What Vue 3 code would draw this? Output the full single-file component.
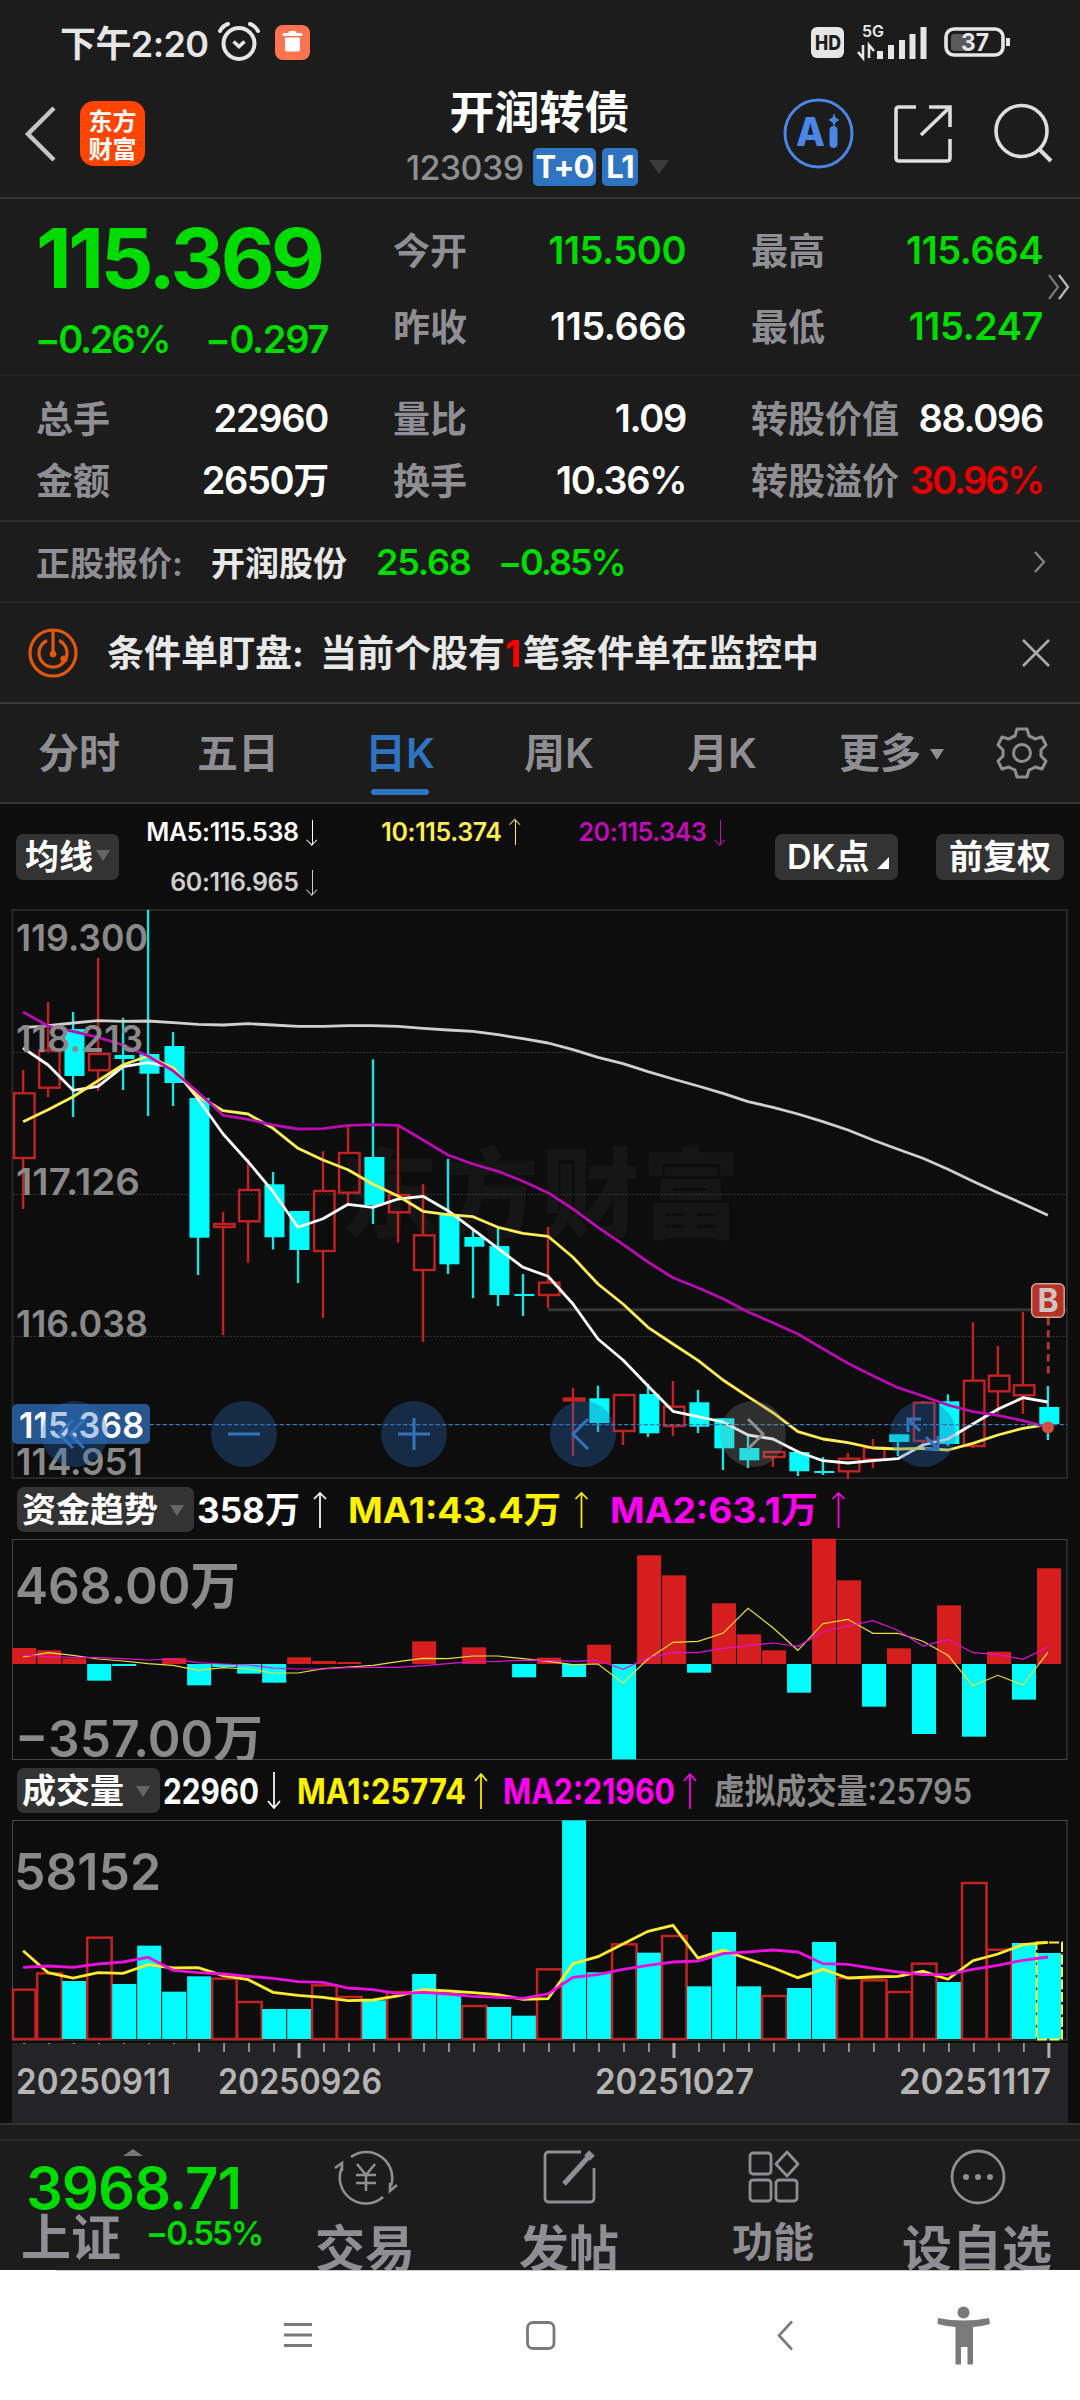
<script setup>
const STEP = 24.995;
const cx = (i) => 23.1 + STEP * i;

// kind, high, body top, body bottom, low
const candles = [
  ["r", 1070, 1093.3, 1158, 1209],
  ["r", 1002, 1050.5, 1087.7, 1097],
  ["c", 1012, 1029, 1076, 1117],
  ["r", 958, 1054, 1070.3, 1091],
  ["c", 1018, 1055, 1059, 1090],
  ["c", 910, 1054, 1073.7, 1116],
  ["c", 1032, 1046, 1083, 1106],
  ["c", 1098, 1098, 1237.7, 1275],
  ["r", 1212, 1224, 1227, 1335],
  ["r", 1159, 1190, 1221.3, 1263],
  ["c", 1172, 1184.3, 1237.3, 1249.5],
  ["c", 1211, 1211, 1250, 1283],
  ["r", 1151.3, 1191, 1251, 1318],
  ["r", 1125.7, 1153, 1192.7, 1203],
  ["c", 1059.3, 1157, 1205, 1224],
  ["r", 1126.7, 1195, 1212.3, 1242.5],
  ["r", 1184, 1235.3, 1270, 1342],
  ["c", 1159, 1215, 1264.3, 1274],
  ["c", 1230, 1237, 1246.7, 1298],
  ["c", 1227, 1246, 1295, 1306],
  ["c", 1274, 1294, 1296, 1316],
  ["r", 1227, 1282.7, 1295, 1308],
  ["r", 1387.7, 1398.5, 1400.5, 1456],
  ["c", 1385.7, 1398.3, 1423, 1432],
  ["r", 1395, 1395, 1431, 1445],
  ["c", 1383.7, 1394, 1433.3, 1437],
  ["r", 1381, 1406.7, 1426, 1436],
  ["c", 1390, 1402.3, 1426.7, 1433],
  ["c", 1418, 1418.3, 1448.3, 1470],
  ["c", 1436, 1448, 1460.3, 1468],
  ["r", 1452, 1452, 1457, 1467],
  ["c", 1450, 1452, 1471.3, 1476],
  ["c", 1457, 1471, 1473, 1475],
  ["r", 1453, 1458.7, 1471.3, 1479],
  ["r", 1439, 1447.7, 1459.3, 1468],
  ["c", 1434, 1434.3, 1442, 1456],
  ["r", 1401, 1402.7, 1441, 1447],
  ["c", 1394.3, 1401.3, 1444, 1446],
  ["r", 1322.3, 1380.7, 1446, 1448],
  ["r", 1346, 1375.7, 1391.3, 1413],
  ["r", 1311.7, 1385.3, 1395.3, 1414],
  ["c", 1386, 1407, 1424, 1440],
];

const ma5 = [1048, 1065, 1090.3, 1086.3, 1066.7, 1062.7, 1067.5, 1099, 1134, 1161.7, 1191.7, 1227.3, 1218.7, 1204.3, 1207.3, 1199, 1196.3, 1210.7, 1229.3, 1248.3, 1267.3, 1276.3, 1304, 1339, 1360, 1386, 1411.3, 1416.7, 1422, 1435, 1439, 1451.7, 1460.7, 1463, 1460.7, 1458.7, 1445, 1439, 1424, 1409.3, 1397.7, 1402];
const ma10 = [1121.7, 1109.7, 1096.7, 1080.7, 1064.7, 1056, 1068.3, 1096, 1110.7, 1114, 1128.3, 1148.3, 1160, 1169.7, 1184.3, 1196, 1211.3, 1214.7, 1216.7, 1227.3, 1233.3, 1236.3, 1257.3, 1284, 1304, 1327.3, 1344, 1360.3, 1380, 1396.7, 1412.7, 1431.7, 1439, 1442.7, 1448, 1449, 1448.3, 1450, 1443.3, 1435, 1428.3, 1424.3];
const ma20 = [1012, 1026, 1031.3, 1037.3, 1045, 1056, 1070.7, 1092.3, 1115.3, 1119.3, 1125, 1129, 1128.7, 1125.3, 1124.7, 1125.3, 1140, 1155, 1164, 1171.3, 1181.3, 1192.7, 1209, 1227.3, 1244.3, 1262, 1277.7, 1287.7, 1298.7, 1312, 1322.7, 1334, 1348.7, 1363.3, 1375.7, 1387.7, 1396, 1405, 1411.7, 1415.3, 1420.7, 1427.3];
const ma60 = [1027.7, 1025.7, 1023, 1020.7, 1021.3, 1021, 1022.7, 1024.3, 1025, 1023.7, 1025, 1026.3, 1026.3, 1025.7, 1025.7, 1026.3, 1028.3, 1030, 1031.3, 1034.7, 1038.7, 1043, 1049.7, 1057.3, 1063.7, 1071.7, 1079, 1086, 1093.3, 1101.7, 1107.3, 1114, 1121.7, 1130, 1140, 1149.3, 1158.3, 1169.3, 1181.3, 1192.7, 1203.7, 1215.3];

// fund flow, positive = inflow
const flow = [48, 41, 17, -50, -6, 0, 18, -64, -9, -29, -56, 20, 9, 6, 0, 0, 68, 0, 50, 0, -40, 19, -39, 58, -286, 326, 266, -26, 182, 89, 41, -86, 376, 251, -128, 47, -210, 176, -218, 37, -107, 287];
const flowMa1 = [381, 368, 376, 387, 393, 401, 406, 421, 413, 417, 429, 429, 416, 411, 406, 395, 385, 386, 378, 378, 386, 394, 404, 402, 459, 387, 337, 334, 310, 235, 293, 361, 281, 268, 310, 310, 334, 376, 467, 436, 465, 367];
const flowMa2 = [375, 380, 382, 383, 386, 390, 387, 398, 402, 405, 414, 417, 417, 413, 412, 412, 407, 401, 395, 394, 391, 391, 394, 391, 418, 383, 367, 368, 355, 347, 339, 349, 306, 288, 272, 301, 348, 328, 368, 373, 388, 351];

const volume = [148, 197, 174, 304, 165, 280, 142, 188, 181, 111, 90, 90, 161, 126, 116, 141, 195, 136, 99, 96, 70, 209, 656, 200, 284, 259, 309, 158, 321, 158, 129, 153, 291, 183, 176, 141, 226, 171, 468, 268, 288, 258];
const volKind = "rrcrccccrrccrrcrccrccrccrcrcccrccrrrrcrrcc";
const volMa1 = [422, 488, 504, 488, 490, 464, 474, 473, 497, 509, 547, 556, 562, 572, 570, 558, 539, 543, 548, 554, 568, 566, 461, 440, 402, 364, 346, 444, 421, 447, 473, 503, 478, 504, 501, 499, 484, 508, 452, 432, 404, 397];
const volMa2 = [472, 468, 472, 462, 456, 442, 481, 488, 492, 499, 505, 515, 517, 534, 539, 551, 547, 552, 559, 562, 565, 552, 502, 494, 478, 466, 456, 453, 431, 426, 420, 426, 461, 463, 475, 486, 494, 493, 478, 466, 451, 441];

const line = (arr, base = 0, k = 1) =>
  arr.map((v, i) => `${cx(i).toFixed(1)},${(base + v / k).toFixed(1)}`).join(" ");

const priceLabels = [
  { t: "119.300", y: 951, w: 132 },
  { t: "118.213", y: 1052, w: 127 },
  { t: "117.126", y: 1195, w: 124 },
  { t: "116.038", y: 1337, w: 132 },
  { t: "114.951", y: 1475, w: 127 },
];

const dates = [
  { t: "20250911", x: 16, w: 155 },
  { t: "20250926", x: 218, w: 164 },
  { t: "20251027", x: 595, w: 159 },
  { t: "20251117", x: 899, w: 152 },
];

const tabs = ["分时", "五日", "日K", "周K", "月K"];
</script>

<template>
  <div class="app">
    <div class="status">
      <span class="time">下午2:20</span>
      <svg class="alarm" width="42" height="40" viewBox="0 0 42 40" fill="none" stroke="#e6e6e6">
        <circle cx="21" cy="21.500" r="15.500" stroke-width="4" />
        <path d="M2 9 Q5 3.500 10 2M40 9 Q37 3.500 32 2" stroke-width="4" stroke-linecap="round" />
        <path d="M15.500 19.500l5.500 5 5.500-5" stroke-width="3.600" />
      </svg>
      <svg class="trash" width="35" height="35" viewBox="0 0 35 35">
        <rect width="35" height="35" rx="8" fill="#ff7350" />
        <path d="M9 9.500h17M15 7.500h5" stroke="#fff" stroke-width="3" stroke-linecap="round" />
        <path d="M10 12.500h15v12q0 2-2 2h-11q-2 0-2-2z" fill="#fff" />
      </svg>
      <svg class="signals" width="204" height="40" viewBox="808 22 204 40">
        <rect x="811" y="27" width="33" height="31" rx="6" fill="#e6e6e6" />
        <text x="815" y="50" font-size="20" font-weight="800" fill="#1c1c1c" textLength="26" lengthAdjust="spacingAndGlyphs">HD</text>
        <text x="862" y="37" font-size="16" font-weight="600" fill="#e6e6e6" textLength="22" lengthAdjust="spacingAndGlyphs">5G</text>
        <path d="M863 45v13l-5-6M869 58V45l5 6" fill="none" stroke="#e6e6e6" stroke-width="2.600" />
        <path d="M880 59v-8M891 59V45M902 59V40M912.500 59V34M923.500 59V27" stroke="#e6e6e6" stroke-width="6" />
        <rect x="946" y="29" width="57" height="26" rx="8" fill="none" stroke="#e6e6e6" stroke-width="3.600" />
        <rect x="951" y="34" width="19" height="17" rx="3" fill="#5a5a5a" />
        <path d="M1008 38v8" stroke="#e6e6e6" stroke-width="4" />
        <text x="961" y="51" font-size="24" font-weight="700" fill="#e6e6e6" textLength="28" lengthAdjust="spacingAndGlyphs">37</text>
      </svg>
    </div>

    <header class="header">
      <svg class="back" width="34" height="58" viewBox="0 0 34 58" fill="none" stroke="#c4c4c4" stroke-width="4.500">
        <path d="M30 3L4 29l26 26" />
      </svg>
      <div class="logo"><span>东方</span><span>财富</span></div>
      <div class="title">
        <div class="name">开润转债</div>
        <div class="code">
          <span class="num">123039</span><b class="t0">T+0</b><b class="l1">L1</b><i class="tri"></i>
        </div>
      </div>
      <svg class="tools" width="280" height="72" viewBox="780 97 280 72" fill="none">
        <circle cx="818.500" cy="133.500" r="33.500" stroke="#4a86e8" stroke-width="3" />
        <text x="796" y="146" font-size="40" font-weight="800" fill="#4a86e8" textLength="29" lengthAdjust="spacingAndGlyphs">A</text>
        <path d="M833.500 130v14" stroke="#4a86e8" stroke-width="8" stroke-linecap="round" />
        <path d="M834 113l1.500 4.500 4 2.500-4 2.500-1.500 4.500-1.500-4.500-4-2.500 4-2.500z" fill="#4a86e8" />
        <path d="M916 107h-17q-3 0-3 3v48q0 3 3 3h48q3 0 3-3v-19M929 107h21v20M949 108l-28 27" stroke="#ddd" stroke-width="3.600" />
        <circle cx="1021.500" cy="131" r="25.500" stroke="#ddd" stroke-width="3.600" />
        <path d="M1039 149l12 12" stroke="#ddd" stroke-width="4" />
      </svg>
    </header>

    <section class="quote">
      <div class="last">
        <div class="price num">115.369</div>
        <div class="chg num"><span class="pct">−0.26%</span><span>−0.297</span></div>
      </div>
      <div class="pair"><label>今开</label><span class="num wide up">115.500</span></div>
      <div class="pair"><label>最高</label><span class="num wide up">115.664</span></div>
      <div class="pair"><label>昨收</label><span class="num wide">115.666</span></div>
      <div class="pair"><label>最低</label><span class="num wide up">115.247</span></div>
      <svg class="more" width="24" height="28" viewBox="0 0 24 28" fill="none" stroke-width="2.200">
        <path d="M2 2l9 12-9 12" stroke="#777" /><path d="M12 2l9 12-9 12" stroke="#bbb" />
      </svg>
    </section>

    <section class="stats">
      <div class="pair"><label>总手</label><span class="num">22960</span></div>
      <div class="pair"><label>量比</label><span class="num">1.09</span></div>
      <div class="pair"><label>转股价值</label><span class="num">88.096</span></div>
      <div class="pair"><label>金额</label><span class="num">2650<small>万</small></span></div>
      <div class="pair"><label>换手</label><span class="num">10.36%</span></div>
      <div class="pair"><label>转股溢价</label><span class="num pct hot">30.96%</span></div>
    </section>

    <section class="stock">
      <span class="lab">正股报价:</span>
      <span class="sname">开润股份</span>
      <span class="num up p">25.68</span>
      <span class="num pct up">−0.85%</span>
      <svg width="14" height="24" viewBox="0 0 14 24" fill="none" stroke="#888" stroke-width="2.200"><path d="M2 2l9 10-9 10" /></svg>
    </section>

    <section class="alert">
      <svg width="50" height="50" viewBox="0 0 50 50" fill="none" stroke="#e2560f" stroke-width="3.200">
        <circle cx="25" cy="25" r="23" />
        <path d="M19 12.500A14 14 0 1 0 31 12.500" />
        <path d="M25 2v22" />
        <circle cx="25" cy="26" r="3" fill="#e2560f" stroke-width="1" />
        <circle cx="36" cy="31" r="2" fill="#e2560f" />
      </svg>
      <p><span class="lead">条件单盯盘:</span>当前个股有<em>1</em>笔条件单在监控中</p>
      <svg class="x" width="28" height="28" viewBox="0 0 28 28" stroke="#aaa" stroke-width="2.600"><path d="M1 1l26 26M27 1L1 27" /></svg>
    </section>

    <nav class="tabs">
      <span v-for="t in tabs" :key="t" :class="{ on: t === '日K' }">{{ t }}</span>
      <span class="moretab">更多<i class="tri"></i></span>
      <svg width="52" height="52" viewBox="-26 -26 52 52" fill="none" stroke="#8e8e93" stroke-width="3" stroke-linejoin="round">
        <path d="M-5-24H5L7-17Q10-16 13-14L20-16 24-8 19-3V3L24 8 20 16 13 14Q10 16 7 17L5 24H-5L-7 17Q-10 16-13 14L-20 16-24 8-19 3V-3L-24-8-20-16-13-14Q-10-16-7-17Z" />
        <circle r="8.500" />
      </svg>
    </nav>

    <div class="legend">
      <button class="chip">均线<i class="tri"></i></button>
      <div class="mas num">
        <span>MA5:115.538<i class="dn"></i></span>
        <span class="y">10:115.374<i class="upa"></i></span>
        <span class="m">20:115.343<i class="dn"></i></span>
        <span class="g">60:116.965<i class="dn"></i></span>
      </div>
      <button class="chip dk">DK点<i class="corner"></i></button>
      <button class="chip fq">前复权</button>
    </div>

    <svg class="chart" width="1080" height="572" viewBox="0 908 1080 572">
      <text class="mark" x="340" y="1230" textLength="400">东方财富</text>
      <rect x="12.500" y="910" width="1054.500" height="568" fill="none" stroke="#262626" stroke-width="2" />
      <path d="M13 1052.500H1067M13 1194.500H1067M13 1336.500H1067" stroke="#333" stroke-dasharray="2 1.500" />
      <path d="M548 1309.700H1067" stroke="#363636" stroke-width="3" />

      <g v-for="(c, i) in candles" :key="i">
        <template v-if="c[0] === 'r'">
          <path :d="`M${cx(i)} ${c[1]}V${c[2]}M${cx(i)} ${c[3]}V${c[4]}`" stroke="#c32222" stroke-width="2.400" />
          <rect :x="cx(i) - 9" :y="c[2]" width="20.500" :height="c[3] - c[2]" fill="none" stroke="#c32222" stroke-width="2.400" />
        </template>
        <template v-else>
          <path :d="`M${cx(i)} ${c[1]}V${c[4]}`" stroke="#22e0e0" stroke-width="2.400" />
          <rect :x="cx(i) - 8.600" :y="c[2]" width="20" :height="c[3] - c[2]" fill="#00fcfc" />
        </template>
      </g>

      <g fill="none" stroke-width="2.800" stroke-linejoin="round">
        <polyline :points="line(ma60)" stroke="#cfcfcf" />
        <polyline :points="line(ma5)" stroke="#fff" />
        <polyline :points="line(ma10)" stroke="#ffee55" />
        <polyline :points="line(ma20)" stroke="#b80cb0" />
      </g>

      <text v-for="p in priceLabels" :key="p.t" x="16" :y="p.y" :textLength="p.w" lengthAdjust="spacingAndGlyphs" class="axis">{{ p.t }}</text>
      <path d="M13 1424.600H1067" stroke="#3a76b8" stroke-width="1.300" stroke-dasharray="4.500 2" />
      <rect x="12" y="1404" width="138" height="40" rx="5" fill="#25568f" />
      <text x="19" y="1438" textLength="125" lengthAdjust="spacingAndGlyphs" class="cur">115.368</text>

      <path d="M1048.200 1318v56" stroke="#a83a2c" stroke-width="3" stroke-dasharray="7.500 4.500" />
      <rect x="1031.700" y="1283.700" width="32.500" height="33.500" rx="5" fill="#b83224" stroke="#c9a39c" stroke-width="1.500" />
      <text x="1048" y="1312" text-anchor="middle" font-size="32" font-weight="700" fill="#cfc4c2">B</text>
      <circle cx="1048" cy="1427.500" r="6" fill="#d05040" />

      <g fill="#2a6ab5" fill-opacity=".34">
        <circle cx="74.500" cy="1434" r="33" />
        <circle cx="244" cy="1434" r="33" />
        <circle cx="414" cy="1434" r="33" />
        <circle cx="583" cy="1434" r="33" />
        <circle cx="923" cy="1434" r="33" />
      </g>
      <circle cx="753" cy="1434" r="33" fill="#8a8a8a" fill-opacity=".28" />
      <g fill="none" stroke="#3273bd" stroke-width="3">
        <path d="M73 1420l-14 14 14 14M84 1420l-14 14 14 14" />
        <path d="M228 1434h32M398 1434h32M414 1418v32" />
        <path d="M588 1419l-15 15 15 15" />
        <path d="M920 1431l-12-12M908 1432v-13h13M926 1437l12 12M938 1436v13h-13" />
      </g>
      <path d="M748 1419l15 15-15 15" fill="none" stroke="#8e8e93" stroke-width="3" />
    </svg>

    <div class="ind">
      <button class="chip">资金趋势<i class="tri"></i></button>
      <svg width="860" height="58" viewBox="196 1480 860 58" class="vals">
        <text x="197" y="1523" textLength="103" lengthAdjust="spacingAndGlyphs" fill="#fff">358万</text>
        <text x="348" y="1523" textLength="213" lengthAdjust="spacingAndGlyphs" fill="#fff200">MA1:43.4万</text>
        <text x="610" y="1523" textLength="208" lengthAdjust="spacingAndGlyphs" fill="#ff00f0">MA2:63.1万</text>
        <g fill="none" stroke-width="1.700">
          <path d="M320 1528v-35M314 1499l6-6 6 6" stroke="#fff" />
          <path d="M581.500 1528v-35M575.500 1499l6-6 6 6" stroke="#fff200" />
          <path d="M838.500 1528v-35M832.500 1499l6-6 6 6" stroke="#ff00f0" />
        </g>
      </svg>
    </div>

    <svg class="chart" width="1080" height="223" viewBox="0 1538 1080 223">
      <rect x="12.500" y="1539.500" width="1054.500" height="220" fill="none" stroke="#444" />
      <rect
        v-for="(v, i) in flow" :key="i" :x="cx(i) - 10.900" width="24"
        :y="v > 0 ? 1664 - v / 3 : 1664" :height="Math.abs(v) / 3" :fill="v > 0 ? '#d61e1e' : '#00fcfc'"
      />
      <polyline :points="line(flowMa1, 1530, 3)" fill="none" stroke="#e8e040" stroke-width="1.200" />
      <polyline :points="line(flowMa2, 1530, 3)" fill="none" stroke="#e010d8" stroke-width="1.200" />
      <text x="15" y="1604" textLength="225" lengthAdjust="spacingAndGlyphs" class="axis big">468.00万</text>
      <text x="15" y="1757" textLength="248" lengthAdjust="spacingAndGlyphs" class="axis big">−357.00万</text>
      <rect x="0" y="1760" width="1080" height="2" fill="#0d0d0d" />
    </svg>

    <div class="ind vol">
      <button class="chip">成交量<i class="tri"></i></button>
      <svg width="900" height="58" viewBox="162 1761 900 58" class="vals">
        <text x="163" y="1804" textLength="96" lengthAdjust="spacingAndGlyphs" fill="#fff">22960</text>
        <text x="297" y="1804" textLength="169" lengthAdjust="spacingAndGlyphs" fill="#fff200">MA1:25774</text>
        <text x="503" y="1804" textLength="172" lengthAdjust="spacingAndGlyphs" fill="#ff00f0">MA2:21960</text>
        <text x="714" y="1804" textLength="258" lengthAdjust="spacingAndGlyphs" fill="#888" class="virt">虚拟成交量:25795</text>
        <g fill="none" stroke-width="1.700">
          <path d="M274 1772v36M268 1801l6 7 6-7" stroke="#fff" />
          <path d="M481 1809v-35M475 1781l6-7 6 7" stroke="#fff200" />
          <path d="M690 1809v-35M684 1781l6-7 6 7" stroke="#ff00f0" />
        </g>
      </svg>
    </div>

    <svg class="chart" width="1080" height="304" viewBox="0 1819 1080 304">
      <rect x="12.500" y="1820.500" width="1054.500" height="219.500" fill="none" stroke="#4a4a4a" />
      <template v-for="(v, i) in volume" :key="i">
        <rect v-if="volKind[i] === 'c'" :x="cx(i) - 10.900" :y="2039 - v / 3" width="24" :height="v / 3" fill="#00fcfc" />
        <rect v-else :x="Math.max(13, cx(i) - 10.900)" :y="2039 - v / 3" :width="i ? 24.500 : 22.500" :height="v / 3" fill="none" stroke="#c32222" stroke-width="2.500" />
      </template>
      <rect x="1036.500" y="1942.500" width="25.500" height="97" fill="none" stroke="#fff23a" stroke-width="2" stroke-dasharray="10 2.500" />
      <polyline :points="line(volMa1, 1810, 3)" fill="none" stroke="#ffec2e" stroke-width="2.800" />
      <polyline :points="line(volMa2, 1810, 3)" fill="none" stroke="#e812dc" stroke-width="2.800" />
      <text x="14" y="1890" textLength="147" lengthAdjust="spacingAndGlyphs" class="axis big">58152</text>

      <rect x="12" y="2043" width="1056" height="80" fill="#242426" />
      <path
        v-for="(v, i) in volume" :key="'t' + i" :d="`M${cx(i) + 1} 2043v${[11, 26, 41].includes(i) ? 15 : i < 7 ? 1 : 9}`"
        stroke="#b0b0b0" :stroke-width="[11, 26, 41].includes(i) ? 3 : 1.500"
      />
      <text v-for="d in dates" :key="d.t" :x="d.x" y="2094" :textLength="d.w" lengthAdjust="spacingAndGlyphs" class="date">{{ d.t }}</text>
    </svg>

    <footer class="bar">
      <div class="index">
        <i class="caret"></i>
        <div class="pts num">3968.71</div>
        <div class="idx"><span>上证</span><span class="num pct up">−0.55%</span></div>
      </div>
      <div class="item">
        <svg width="64" height="56" viewBox="-32 -28 64 56" fill="none" stroke="#8e8e93" stroke-width="2.600">
          <path d="M-15-20A26 26 0 0 1 25 9M17 20A26 26 0 0 1-24-10" />
          <path d="M-31-9l7-5v8M31 8l-7 6v-8" />
          <path d="M-9-13L0-2 9-13M0-2v16M-10-2h20M-10 6h20" />
        </svg>
        <span>交易</span>
      </div>
      <div class="item">
        <svg width="56" height="56" viewBox="0 0 56 56" fill="none" stroke="#8e8e93" stroke-width="2.800">
          <path d="M39 3H7q-4 0-4 4v42q0 4 4 4h41q4 0 4-4V19" />
          <path d="M49 5L22 35" stroke-width="5" /><path d="M50 4l-5 5" stroke-width="8" />
        </svg>
        <span>发帖</span>
      </div>
      <div class="item small">
        <svg width="56" height="56" viewBox="0 0 56 56" fill="none" stroke="#8e8e93" stroke-width="2.800">
          <rect x="4" y="4" width="21" height="21" rx="3" /><rect x="4" y="31" width="21" height="21" rx="3" />
          <rect x="30" y="31" width="21" height="21" rx="3" /><path d="M41 3l11 12-11 12-11-12z" stroke-linejoin="round" />
        </svg>
        <span>功能</span>
      </div>
      <div class="item">
        <svg width="56" height="56" viewBox="-28 -28 56 56" fill="none" stroke="#8e8e93" stroke-width="2.800">
          <circle r="26" />
          <g fill="#8e8e93" stroke="none"><circle cx="-12" r="3" /><circle r="3" /><circle cx="12" r="3" /></g>
        </svg>
        <span>设自选</span>
      </div>
    </footer>

    <div class="sysnav">
      <svg width="1080" height="130" viewBox="0 2270 1080 130" fill="none" stroke="#7a7a7a">
        <path d="M56 2270.500H1024" stroke="#ccc" />
        <path d="M284 2324.500h28M284 2335h28M284 2345.500h28" stroke-width="3" />
        <rect x="527.500" y="2322.500" width="26.500" height="26" rx="5.500" stroke-width="2.800" />
        <path d="M792 2321.500L779 2335.500l13 14" stroke-width="2.600" />
        <g fill="#7a7a7a" stroke="none">
          <circle cx="963.500" cy="2312.500" r="6" />
          <path d="M938 2318q25 5 51 0l1 6q-8 2.500-17 3v37.500h-5.500V2347h-6.500v17.500h-5.500V2327q-9-.5-18-3z" />
        </g>
      </svg>
    </div>
  </div>
</template>

<style>
body {
  margin: 0;
  background: #1c1c1c;
}
</style>

<style scoped>
* {
  box-sizing: border-box;
}
.app {
  width: 1080px;
  height: 2400px;
  overflow: hidden;
  background: #1c1c1c;
  color: #fff;
  font-family: Inter, "Noto Sans CJK SC", sans-serif;
  font-weight: 600;
}
svg {
  display: block;
  flex: none;
}
.num {
  letter-spacing: -0.035em;
  font-weight: 600;
}
.num.wide {
  letter-spacing: -0.012em;
}
.num.pct,
.pct {
  letter-spacing: -0.06em;
}
.up {
  color: #00dc00;
}
.pair .hot {
  color: #e60000;
}
.tri {
  display: inline-block;
  border: 7px solid transparent;
  border-top: 11px solid #666;
  border-bottom: 0;
}

.status {
  height: 84px;
  display: flex;
  align-items: center;
  padding-left: 60px;
  color: #e6e6e6;
}
.time {
  width: 158px;
  margin-top: -3px;
  font-size: 36px;
  font-weight: 600;
  letter-spacing: -0.6px;
  white-space: nowrap;
}
.trash {
  margin-left: 15px;
}
.signals {
  margin: 0 68px 0 auto;
}

.header {
  height: 115px;
  display: flex;
  align-items: flex-start;
  border-bottom: 2px solid #343434;
}
.back {
  margin: 21px 0 0 24px;
}
.logo {
  width: 65px;
  height: 65px;
  margin: 17px 0 0 22px;
  border-radius: 14px;
  background: #ff4500;
  display: flex;
  flex-direction: column;
  align-items: center;
  justify-content: center;
  font: 700 24px/28px "Noto Sans CJK SC", sans-serif;
}
.title {
  width: 300px;
  margin-left: 245px;
  text-align: center;
}
.name {
  margin-left: -1px;
  padding-top: 1px;
  font-size: 45px;
  line-height: 56px;
  font-weight: 700;
}
.code {
  margin-top: 5px;
  height: 42px;
  display: flex;
  align-items: center;
  padding-left: 16px;
  color: #8e8e93;
  font-size: 34px;
}
.code .num {
  width: 127px;
  text-align: left;
  font-weight: 500;
  letter-spacing: -0.6px;
}
.code b {
  height: 38px;
  line-height: 38px;
  border-radius: 5px;
  background: #2f74c0;
  color: #fff;
  font-size: 31px;
  font-weight: 700;
  letter-spacing: -1px;
}
.t0 {
  width: 63px;
}
.l1 {
  width: 36px;
  margin-left: 6px;
}
.code .tri {
  margin-left: 11px;
  border-width: 14px 10px 0;
  border-top-color: #3c3c3c;
}
.tools {
  margin: 13px 0 0 90px;
}

.quote {
  position: relative;
  height: 177px;
  padding: 13px 37px 13px;
  display: grid;
  grid-template-columns: 291px 292px 291px;
  grid-template-rows: 76px 76px;
  border-bottom: 1px solid #262626;
}
.last {
  grid-row: span 2;
  color: #00dc00;
}
.price {
  margin: 0 0 0 -1px;
  font-size: 83px;
  line-height: 92px;
  font-weight: 700;
  letter-spacing: -0.042em;
}
.chg {
  display: flex;
  justify-content: space-between;
  margin: 12px 0 0 -2px;
  font-size: 38px;
  line-height: 46px;
}
.pair {
  display: flex;
  align-items: center;
  justify-content: space-between;
  font-size: 38px;
  white-space: nowrap;
}
.pair label {
  margin: -2px 0 0 -1px;
  color: #8e8e93;
  font-size: 37px;
}
.pair small {
  font-size: 36px;
  line-height: 1;
}
.quote,
.stats {
  column-gap: 66px;
}
.more {
  position: absolute;
  left: 1047px;
  top: 74px;
}
.stats {
  height: 146px;
  padding: 11px 37px;
  display: grid;
  grid-template-columns: 291px 292px 291px;
  grid-template-rows: 62px 62px;
  border-bottom: 2px solid #2c2c2c;
}

.stock {
  height: 81px;
  display: flex;
  align-items: center;
  padding: 0 33px 0 36px;
  border-bottom: 2px solid #262626;
  font-size: 34px;
  white-space: nowrap;
}
.stock .lab {
  width: 175px;
  color: #8e8e93;
}
.stock .sname {
  width: 165px;
  color: #e8e8e8;
}
.stock .num {
  font-size: 36px;
}
.stock .p {
  width: 122px;
}
.stock svg {
  margin-left: auto;
}

.alert {
  height: 101px;
  display: flex;
  align-items: center;
  padding: 0 30px 0 28px;
  border-bottom: 2px solid #3a3a3a;
}
.alert p {
  margin: 2px 0 0 29px;
  display: flex;
  color: #e8e8e8;
  font-size: 37px;
  line-height: 50px;
  white-space: nowrap;
}
.lead {
  width: 213px;
}
.alert em {
  width: 18px;
  color: #f00;
  font-style: normal;
  font-weight: 700;
}
.x {
  margin-left: auto;
}

.tabs {
  height: 100px;
  display: grid;
  grid-template-columns: 159px 171px 156px 163px 152px 157px 52px;
  align-items: center;
  padding-left: 38px;
  border-bottom: 2px solid #333;
  color: #8e8e93;
  font-size: 41px;
  line-height: 98px;
}
.tabs .on {
  position: relative;
  margin-left: -3px;
  color: #2f74c0;
}
.tabs .on::after {
  content: "";
  position: absolute;
  left: 6px;
  bottom: 7px;
  width: 58px;
  height: 6px;
  border-radius: 3px;
  background: #2f74c0;
}
.moretab .tri {
  margin: 0 0 8px 9px;
  border-width: 11px 7px 0;
  border-top-color: #8e8e93;
}

.legend,
.ind,
.chart {
  background: #0d0d0d;
}
.legend {
  height: 104px;
  display: flex;
  padding: 30px 16px 0;
}
.chip {
  flex: none;
  width: 103px;
  height: 46px;
  padding: 0 0 0 9px;
  border: 0;
  border-radius: 7px;
  background: #333;
  color: #fff;
  font: 600 34px/46px Inter, "Noto Sans CJK SC", sans-serif;
  text-align: left;
  white-space: nowrap;
}
.chip .tri {
  margin: 0 0 8px 3px;
}
.mas {
  width: 607px;
  height: 102px;
  margin-top: -27px;
  display: grid;
  grid-template-columns: 199px 203px 205px;
  grid-template-rows: 50px 50px;
  align-items: center;
  justify-items: end;
  font-size: 25px;
  letter-spacing: -0.4px;
}
.mas span {
  display: flex;
  align-items: center;
}
.dn,
.upa {
  position: relative;
  width: 1.5px;
  height: 25px;
  margin: 0 5px 0 13px;
  background: currentColor;
}
.dn::after,
.upa::after {
  content: "";
  position: absolute;
  left: -3.2px;
  bottom: 1px;
  width: 6.5px;
  height: 6.5px;
  border: solid currentColor;
  border-width: 0 1.5px 1.5px 0;
  transform: rotate(45deg);
}
.upa::after {
  bottom: auto;
  top: 1px;
  transform: rotate(225deg);
}
.y {
  color: #ffee55;
}
.m {
  color: #c00cb8;
}
.g {
  color: #cfcfcf;
}
.dk {
  width: 123px;
  margin-left: 49px;
  padding-left: 12px;
}
.corner {
  display: inline-block;
  margin-left: 8px;
  border-left: 12px solid transparent;
  border-bottom: 12px solid #fff;
}
.fq {
  width: 128px;
  margin-left: 38px;
  padding-left: 13px;
}

.chart text,
.signals text,
.tools text {
  font-family: Inter, "Noto Sans CJK SC", sans-serif;
}
.mark {
  font-size: 98px;
  font-weight: 900;
  fill: #151515;
}
.axis {
  font-size: 37px;
  font-weight: 600;
  fill: #8a8a8a;
}
.big {
  font-size: 51px;
}
.cur {
  font-size: 36px;
  font-weight: 600;
  fill: #fff;
}
.date {
  font-size: 36px;
  font-weight: 600;
  fill: #b5b5b5;
}

.ind {
  height: 58px;
  display: flex;
  padding: 7px 0 0 17px;
}
.ind .chip {
  width: 177px;
  height: 45px;
  padding-left: 5px;
}
.ind .chip .tri {
  margin: 0 0 6px 12px;
}
.ind .vals {
  margin: -7px 0 0 2px;
  font-size: 36px;
  font-weight: 700;
}
.ind.vol .chip {
  width: 143px;
}
.vol .virt {
  font-size: 35px;
  font-weight: 600;
}

.bar {
  height: 147px;
  display: grid;
  grid-template-columns: 264px repeat(4, 204px);
  border-top: 2px solid #333;
  overflow: hidden;
  color: #8e8e93;
  position: relative;
}
.bar::before {
  content: "";
  position: absolute;
  top: 14px;
  width: 100%;
  height: 2px;
  background: #282828;
}
.index {
  padding: 24px 0 0 21px;
  white-space: nowrap;
}
.caret {
  display: block;
  width: 0;
  margin-left: 102px;
  border: 10px solid transparent;
  border-top: 0;
  border-bottom: 7px solid #777;
}
.pts {
  margin: 7px 0 0 5px;
  height: 50px;
  color: #00dc00;
  font-size: 58px;
  line-height: 50px;
  letter-spacing: -0.018em;
}
.idx {
  display: flex;
  height: 50px;
  line-height: 50px;
  font-size: 50px;
}
.idx .num {
  margin: -5px 0 0 25px;
  font-size: 33px;
}
.item {
  display: flex;
  flex-direction: column;
  align-items: center;
  padding-top: 24px;
  font-size: 50px;
  line-height: 60px;
}
.item span {
  margin: 14px 0 0 -2px;
}
.small span {
  margin-top: 7px;
  font-size: 41px;
}
.sysnav {
  height: 130px;
  background: #fff;
}
</style>
